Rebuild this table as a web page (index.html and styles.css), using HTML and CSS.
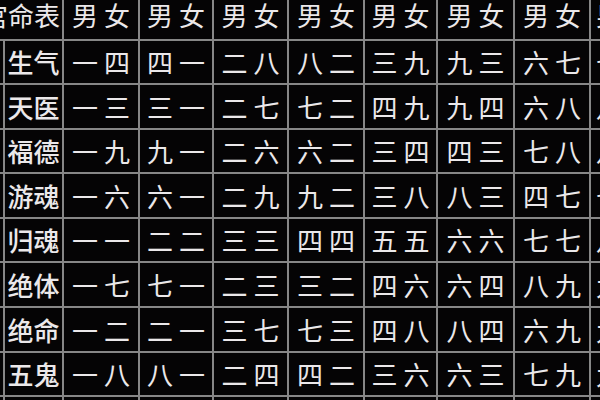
FILE: index.html
```html
<!DOCTYPE html>
<html lang="zh-CN">
<head>
<meta charset="utf-8">
<title>宫命表</title>
<link rel="stylesheet" href="styles.css">
</head>
<body>
<div class="viewport">
  <div class="table">
    <div class="cell head corner">宫命表</div>
    <div class="cell head">男女</div>
    <div class="cell head">男女</div>
    <div class="cell head">男女</div>
    <div class="cell head">男女</div>
    <div class="cell head">男女</div>
    <div class="cell head">男女</div>
    <div class="cell head">男女</div>
    <div class="cell head edge">男女</div>

    <div class="cell side"></div><div class="cell label">生气</div>
    <div class="cell">一四</div><div class="cell">四一</div><div class="cell">二八</div><div class="cell">八二</div><div class="cell">三九</div><div class="cell">九三</div><div class="cell">六七</div><div class="cell edge">七六</div>

    <div class="cell side"></div><div class="cell label">天医</div>
    <div class="cell">一三</div><div class="cell">三一</div><div class="cell">二七</div><div class="cell">七二</div><div class="cell">四九</div><div class="cell">九四</div><div class="cell">六八</div><div class="cell edge">八六</div>

    <div class="cell side"></div><div class="cell label">福德</div>
    <div class="cell">一九</div><div class="cell">九一</div><div class="cell">二六</div><div class="cell">六二</div><div class="cell">三四</div><div class="cell">四三</div><div class="cell">七八</div><div class="cell edge">八七</div>

    <div class="cell side"></div><div class="cell label">游魂</div>
    <div class="cell">一六</div><div class="cell">六一</div><div class="cell">二九</div><div class="cell">九二</div><div class="cell">三八</div><div class="cell">八三</div><div class="cell">四七</div><div class="cell edge">七四</div>

    <div class="cell side"></div><div class="cell label">归魂</div>
    <div class="cell">一一</div><div class="cell">二二</div><div class="cell">三三</div><div class="cell">四四</div><div class="cell">五五</div><div class="cell">六六</div><div class="cell">七七</div><div class="cell edge">八八</div>

    <div class="cell side"></div><div class="cell label">绝体</div>
    <div class="cell">一七</div><div class="cell">七一</div><div class="cell">二三</div><div class="cell">三二</div><div class="cell">四六</div><div class="cell">六四</div><div class="cell">八九</div><div class="cell edge">九八</div>

    <div class="cell side"></div><div class="cell label">绝命</div>
    <div class="cell">一二</div><div class="cell">二一</div><div class="cell">三七</div><div class="cell">七三</div><div class="cell">四八</div><div class="cell">八四</div><div class="cell">六九</div><div class="cell edge">九六</div>

    <div class="cell side"></div><div class="cell label">五鬼</div>
    <div class="cell">一八</div><div class="cell">八一</div><div class="cell">二四</div><div class="cell">四二</div><div class="cell">三六</div><div class="cell">六三</div><div class="cell">七九</div><div class="cell edge">九七</div>

    <div class="cell side"></div><div class="cell label">祸害</div>
    <div class="cell">一五</div><div class="cell">五一</div><div class="cell">二五</div><div class="cell">五二</div><div class="cell">三七</div><div class="cell">七三</div><div class="cell">四五</div><div class="cell edge">五四</div>
  </div>
</div>
</body>
</html>
```

FILE: styles.css
```css
html, body {
  margin: 0;
  padding: 0;
  background: #000;
}

.viewport {
  width: 600px;
  height: 400px;
  overflow: hidden;
  background: #000;
}

.table {
  display: grid;
  grid-template-columns: 43px 57px 74px 72px 73px 74px 71px 75px 74px 74px;
  grid-template-rows: 39px 42px 43px 42px 43px 42px 43px 43px 42px 42px;
  gap: 2px;
  background: #878787;
  margin-left: -40px;
  width: max-content;
  font-family: "Noto Sans CJK SC", "Noto Sans", sans-serif;
  color: #ebe8ea;
}

.cell {
  background: #050405;
  display: flex;
  align-items: center;
  justify-content: center;
  font-size: 26px;
  letter-spacing: 6px;
  padding-left: 6px;
  line-height: 1;
  white-space: nowrap;
}

.head {
  align-items: flex-start;
  padding-top: 2px;
}

.corner {
  grid-column: span 2;
  justify-content: flex-end;
  letter-spacing: 0;
  padding-left: 0;
  padding-right: 2px;
}

.edge {
  justify-content: flex-start;
  padding-left: 5px;
}

.label {
  letter-spacing: 0;
  padding-left: 0;
  font-weight: 500;
}

.side {
  background: #050405;
}
```
